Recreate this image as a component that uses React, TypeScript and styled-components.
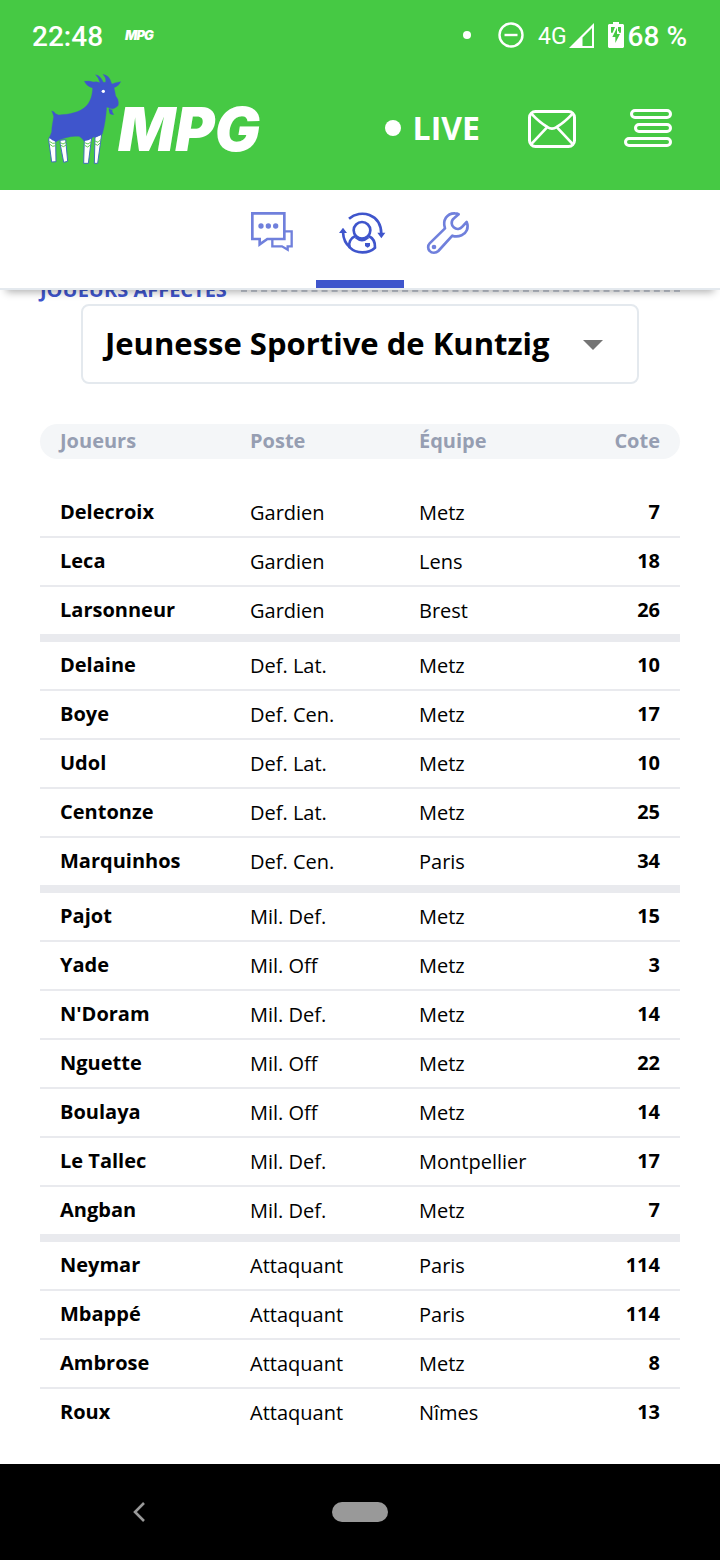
import React, { useState } from 'react';
import styled, { createGlobalStyle, css } from 'styled-components';

const green = '#46c944';
const blue = '#3f55cc';
const blueSoft = '#7080dc';
const line = '#e9eaee';

const GlobalStyle = createGlobalStyle`
  *, *::before, *::after { box-sizing: border-box; }
  body {
    margin: 0;
    background: #fff;
    color: #000;
    font-family: 'Open Sans', 'Noto Sans', sans-serif;
    font-size: 20px;
  }
`;

const Screen = styled.div`
  min-height: 100vh;
  display: flex;
  flex-direction: column;
`;

const Header = styled.header`
  position: sticky;
  top: 0;
  z-index: 2;
  background: #fff;
`;

const GreenArea = styled.div`
  background: ${green};
  color: #fff;
`;

const StatusBar = styled.div`
  height: 70px;
  padding: 0 33px 0 32px;
  display: flex;
  align-items: center;
`;

const StatusText = styled.span<{ $light?: boolean }>`
  padding-top: 4px;
  font-family: Roboto, sans-serif;
  font-size: ${(p) => (p.$light ? 23 : 28)}px;
  font-weight: ${(p) => (p.$light ? 400 : 500)};
  line-height: 32px;
`;

const MiniBrand = styled.span`
  margin: 0 auto 0 22px;
  font: italic 900 13px/16px Inter, sans-serif;
  letter-spacing: -1px;
`;

const Dot = styled.span<{ $size: number }>`
  width: ${(p) => p.$size}px;
  height: ${(p) => p.$size}px;
  border-radius: 50%;
  background: currentColor;
`;

const StatusGroup = styled.span<{ $gap: number }>`
  display: flex;
  align-items: center;
  gap: ${(p) => p.$gap}px;
`;

const Indicators = styled.div`
  display: flex;
  align-items: center;
`;

const DndIcon = styled.svg`
  width: 26px;
  height: 26px;
  margin: 0 14px 0 27px;
`;

const SignalIcon = styled.svg`
  width: 26px;
  height: 26px;
  margin-right: 13px;
`;

const BatteryIcon = styled.svg`
  width: 16px;
  height: 26px;
`;

const TopBar = styled.div`
  height: 120px;
  padding: 0 48px 2px;
  display: flex;
  align-items: center;
  justify-content: space-between;
`;

const Logo = styled.a`
  height: 118px;
  padding-top: 3px;
  display: flex;
  align-items: flex-start;
  color: #fff;
  text-decoration: none;
`;

const Goat = styled.svg`
  width: 70px;
  height: 92px;
  overflow: visible;
`;

const Wordmark = styled.span`
  padding-top: 21px;
  font: italic 900 60px/70px Inter, sans-serif;
`;

const Actions = styled.div`
  display: flex;
  align-items: center;
  gap: 48px;
`;

const Live = styled.a`
  padding-bottom: 2px;
  display: flex;
  align-items: center;
  gap: 12px;
  color: #fff;
  font-size: 32px;
  line-height: 40px;
  font-weight: 700;
  text-decoration: none;
`;

const IconButton = styled.button`
  display: flex;
  padding: 0;
  border: 0;
  background: none;
  color: inherit;
`;

const ActionIcon = styled.svg`
  width: 48px;
  height: 40px;
`;

const Tabs = styled.nav`
  display: flex;
  justify-content: center;
  border-bottom: 2px solid #e4e9ee;
  box-shadow: 0 8px 8px -6px rgba(0, 0, 0, 0.32);
`;

const Tab = styled.a<{ $active?: boolean }>`
  width: 88px;
  height: 98px;
  padding-top: 20px;
  display: flex;
  flex-direction: column;
  align-items: center;
  justify-content: space-between;
  color: ${(p) => (p.$active ? blue : blueSoft)};
  border-bottom: 8px solid ${(p) => (p.$active ? blue : 'transparent')};
`;

const TabIcon = styled.svg`
  width: 48px;
  height: 44px;
  overflow: visible;
  fill: none;
  stroke: currentColor;
  stroke-width: 8;
`;

const Main = styled.main`
  flex: 1;
  margin-top: -14px;
  padding: 0 40px 28px;
`;

const SectionTitle = styled.h2`
  margin: 0;
  display: flex;
  align-items: center;
  gap: 14px;
  color: ${blue};
  font-size: 20px;
  line-height: 28px;
  font-weight: 700;
  text-transform: uppercase;

  &::after {
    content: '';
    flex: 1;
    margin-top: 2px;
    border-top: 2px dashed #c4cad4;
  }
`;

const Picker = styled.label`
  position: relative;
  display: block;
  margin: 0 41px 40px;
`;

const TeamSelect = styled.select`
  appearance: none;
  width: 100%;
  height: 80px;
  padding: 0 60px 2px 16px;
  border: 2px solid #e4e9ee;
  border-radius: 8px;
  background: #fff;
  color: #000;
  font: 700 31px/44px 'Open Sans', 'Noto Sans', sans-serif;
  text-indent: 6px;
`;

const Caret = styled.svg`
  position: absolute;
  right: 36px;
  top: 36px;
  width: 20px;
  height: 10px;
  fill: #757575;
  pointer-events: none;
`;

const Table = styled.table`
  width: 100%;
  table-layout: fixed;
  border-collapse: separate;
  border-spacing: 0;
  line-height: 27px;
  text-align: left;
`;

const Col = styled.col<{ $width?: string }>`
  width: ${(p) => p.$width ?? 'auto'};
`;

const edges = css`
  &:first-child { padding-left: 20px; }
  &:last-child { padding-right: 20px; text-align: right; }
`;

const HeadCell = styled.th`
  height: 35px;
  padding: 0 0 2px;
  background: #f4f6f8;
  color: #969eb2;
  font-weight: 700;
  ${edges}
  &:first-child { border-radius: 18px 0 0 18px; }
  &:last-child { border-radius: 0 18px 18px 0; }
`;

const Body = styled.tbody`
  &::before {
    content: '';
    display: block;
    height: 30px;
  }
`;

const Row = styled.tr<{ $border: number }>`
  & > * {
    height: ${(p) => 47 + p.$border}px;
    padding: 0 0 1px;
    border-bottom: ${(p) => p.$border}px solid ${line};
    font-weight: 400;
    ${edges}
  }
  & > :first-child, & > :last-child {
    padding-bottom: 3px;
    font-weight: 700;
  }
`;

const SystemBar = styled.footer`
  position: sticky;
  bottom: 0;
  height: 96px;
  background: #000;
  display: grid;
  grid-template-columns: 1fr 56px 1fr;
  align-items: center;
  color: #999;
`;

const BackButton = styled(IconButton)`
  justify-self: center;
  margin-right: 54px;
`;

const HomeButton = styled.button`
  height: 20px;
  padding: 0;
  border: 0;
  border-radius: 10px;
  background: #999;
`;

const teams = ['Jeunesse Sportive de Kuntzig'];

type Player = [name: string, position: string, club: string, price: number];

const lines: Player[][] = [
  [
    ['Delecroix', 'Gardien', 'Metz', 7],
    ['Leca', 'Gardien', 'Lens', 18],
    ['Larsonneur', 'Gardien', 'Brest', 26],
  ],
  [
    ['Delaine', 'Def. Lat.', 'Metz', 10],
    ['Boye', 'Def. Cen.', 'Metz', 17],
    ['Udol', 'Def. Lat.', 'Metz', 10],
    ['Centonze', 'Def. Lat.', 'Metz', 25],
    ['Marquinhos', 'Def. Cen.', 'Paris', 34],
  ],
  [
    ['Pajot', 'Mil. Def.', 'Metz', 15],
    ['Yade', 'Mil. Off', 'Metz', 3],
    ["N'Doram", 'Mil. Def.', 'Metz', 14],
    ['Nguette', 'Mil. Off', 'Metz', 22],
    ['Boulaya', 'Mil. Off', 'Metz', 14],
    ['Le Tallec', 'Mil. Def.', 'Montpellier', 17],
    ['Angban', 'Mil. Def.', 'Metz', 7],
  ],
  [
    ['Neymar', 'Attaquant', 'Paris', 114],
    ['Mbappé', 'Attaquant', 'Paris', 114],
    ['Ambrose', 'Attaquant', 'Metz', 8],
    ['Roux', 'Attaquant', 'Nîmes', 13],
  ],
];

// A thin rule parts players, a thick one parts the lines of the squad.
function borderFor(lineIndex: number, playerIndex: number) {
  if (playerIndex < lines[lineIndex].length - 1) return 2;
  return lineIndex < lines.length - 1 ? 8 : 0;
}

function GoatLogo() {
  return (
    <Goat viewBox="24 15 210 276" aria-hidden="true">
      <g fill="#fff" stroke="#3f6fb8" strokeWidth="3" strokeLinejoin="round">
        <path d="M28 208 L47 216 L48 281 L35 282 L26 216 Z" />
        <path d="M60 217 L77 215 L83 280 L71 283 L61 230 Z" />
        <path d="M133 214 L155 208 L145 286 L131 286 Z" />
        <path d="M165 207 L185 199 L173 286 L163 286 Z" />
      </g>
      <g fill="none" stroke="#5fce50" strokeWidth="3">
        <path d="M28 220 L38 226 L47 225 M30 229 L38 235 L47 233" />
        <path d="M61 224 L69 228 L78 223 M63 232 L70 236 L79 231" />
        <path d="M134 224 L144 228 L153 222 M134 232 L143 237 L151 231" />
        <path d="M165 219 L174 223 L183 214 M165 228 L173 232 L181 224" />
      </g>
      <path
        fill={blue}
        stroke={blue}
        strokeWidth="1"
        d="M35 129 Q42 130 47 137 L56 141 C90 139 120 133 138 115 C152 100 157 82 158 60 Q140 55 133 40 Q148 38 160 42 Q170 40 180 44 Q177 30 167 20 Q182 23 190 43 L197 43 Q200 31 189 19 Q208 22 214 44 L216 48 Q226 43 242 41 Q236 54 222 59 Q225 72 227 84 Q236 93 235 108 Q236 114 229 117 Q222 125 210 121 L200 117 C198 145 194 175 187 198 Q176 204 166 208 L162 206 Q150 216 132 219 Q128 211 117 205 Q95 203 78 209 Q58 214 48 221 Q36 217 28 209 L35 192 C35 175 40 158 41 145 Q39 136 35 129 Z"
      />
      <path fill={blue} d="M207 121 Q214 127 217 124 Q215 134 222 140 Q208 142 208 132 Q205 128 207 121 Z" />
      <circle cx="190" cy="70" r="5" fill="#fff" />
    </Goat>
  );
}

export default function App() {
  const [team, setTeam] = useState(teams[0]);

  return (
    <Screen>
      <GlobalStyle />
      <Header>
        <GreenArea>
          <StatusBar>
            <StatusText>22:48</StatusText>
            <MiniBrand>MPG</MiniBrand>
            <Indicators>
              <Dot $size={8} />
              <DndIcon viewBox="0 0 26 26" fill="none" stroke="currentColor" aria-hidden="true">
                <circle cx="13" cy="13" r="11.5" strokeWidth="2.4" />
                <path d="M6.5 13 H19.5" strokeWidth="2.4" />
              </DndIcon>
              <StatusGroup $gap={2}>
                <StatusText $light>4G</StatusText>
                <SignalIcon viewBox="0 0 26 26" aria-hidden="true">
                  <path fill="currentColor" fillRule="evenodd" d="M25 1 V26 H0 Z M23 6 L13.5 15.5 V24 H23 Z" />
                </SignalIcon>
              </StatusGroup>
              <StatusGroup $gap={4}>
                <BatteryIcon viewBox="0 0 48 78" aria-hidden="true">
                  <path fill="currentColor" d="M15 0 H33 V6 H45 L48 9 V75 L45 78 H3 L0 75 V9 L3 6 H15 Z" />
                  <path fill={green} d="M9 15 H21 L14 32 H9 Z M30 15 H39 V32 H33 V28 H30 Z" />
                  <path fill={green} d="M27 17 L13 45 H22 V63 L36 36 H27 Z" />
                </BatteryIcon>
                <StatusText>68 %</StatusText>
              </StatusGroup>
            </Indicators>
          </StatusBar>
          <TopBar>
            <Logo href="#" aria-label="MPG">
              <GoatLogo />
              <Wordmark>MPG</Wordmark>
            </Logo>
            <Actions>
              <Live href="#live">
                <Dot $size={16} />
                <span>LIVE</span>
              </Live>
              <IconButton type="button" aria-label="Messages">
                <ActionIcon viewBox="504 327 144 120" fill="none" stroke="currentColor" strokeWidth="9" aria-hidden="true">
                  <rect x="508.500" y="334.500" width="135" height="105" rx="18" />
                  <path d="M514 341 C530 358 548 373 562 381 Q576 391 590 381 C604 373 622 358 638 341 M513 433 L561 382 M639 433 L591 382" strokeWidth="8" />
                </ActionIcon>
              </IconButton>
              <IconButton type="button" aria-label="Menu">
                <ActionIcon viewBox="792 327 144 120" fill="none" stroke="currentColor" strokeWidth="9" aria-hidden="true">
                  <rect x="814.500" y="331.500" width="117" height="21" rx="10.500" />
                  <rect x="826.500" y="373.500" width="105" height="21" rx="10.500" />
                  <rect x="796.500" y="415.500" width="135" height="21" rx="10.500" />
                </ActionIcon>
              </IconButton>
            </Actions>
          </TopBar>
        </GreenArea>
        <Tabs>
          <Tab href="#chat" aria-label="Discussion">
            <TabIcon viewBox="54 60 144 132">
              <path d="M67 70 H163 V147 H112 L89 163 V147 H67 Z" />
              <path d="M164 124 H185 V169 H173 V179 L156 169 H127 V150" strokeWidth="7" />
              <g fill="currentColor" stroke="none">
                <circle cx="93" cy="108" r="8" />
                <circle cx="115" cy="108" r="8" />
                <circle cx="137" cy="108" r="8" />
              </g>
            </TabIcon>
          </Tab>
          <Tab href="#mercato" aria-label="Mercato" $active>
            <TabIcon viewBox="318 60 144 132">
              <path d="M357 86 C392 56 453 72 454 132" />
              <path d="M339 126 C340 148 347 162 360 172" />
              <circle cx="396" cy="121" r="25" />
              <path d="M376 138 C361 145 355 159 359 172 C379 192 415 192 435 173 C436 155 429 144 416 138" />
              <path d="M378 141 Q396 157 414 141" strokeWidth="10" />
              <g fill="currentColor" stroke="none">
                <path d="M442 128 H466 L454 145 Z M327 129 H351 L339 113 Z" />
                <path d="M405 159 H420 V168 L413 173 L405 168 Z" />
              </g>
            </TabIcon>
          </Tab>
          <Tab href="#settings" aria-label="Réglages">
            <TabIcon viewBox="582 60 144 132">
              <path
                strokeLinejoin="round"
                strokeWidth="8"
                d="M599 160 L645 115 C637 92 650 69 675 70 Q682 70 686 73 L672 85 C661 94 665 107 671 112 C680 120 690 118 697 110 L710 96 C718 114 708 131 695 136 Q680 142 667 137 L625 183 C618 190 605 190 599 183 C593 177 593 166 599 160 Z"
              />
              <circle cx="612" cy="171" r="7" fill="currentColor" stroke="none" />
            </TabIcon>
          </Tab>
        </Tabs>
      </Header>

      <Main>
        <SectionTitle>Joueurs affectés</SectionTitle>
        <Picker>
          <TeamSelect aria-label="Équipe" value={team} onChange={(e) => setTeam(e.target.value)}>
            {teams.map((name) => (
              <option key={name}>{name}</option>
            ))}
          </TeamSelect>
          <Caret viewBox="0 0 20 10" aria-hidden="true">
            <path d="M0 0 H20 L10 10 Z" />
          </Caret>
        </Picker>
        <Table>
          <colgroup>
            <Col $width="210px" />
            <Col $width="169px" />
            <Col />
            <Col $width="110px" />
          </colgroup>
          <thead>
            <tr>
              <HeadCell scope="col">Joueurs</HeadCell>
              <HeadCell scope="col">Poste</HeadCell>
              <HeadCell scope="col">Équipe</HeadCell>
              <HeadCell scope="col">Cote</HeadCell>
            </tr>
          </thead>
          <Body>
            {lines.map((players, i) =>
              players.map(([name, position, club, price], j) => (
                <Row key={name} $border={borderFor(i, j)}>
                  <th scope="row">{name}</th>
                  <td>{position}</td>
                  <td>{club}</td>
                  <td>{price}</td>
                </Row>
              )),
            )}
          </Body>
        </Table>
      </Main>

      <SystemBar>
        <BackButton type="button" aria-label="Retour">
          <svg width="14" height="22" viewBox="0 0 14 22" fill="none" stroke="currentColor" strokeWidth="2.600" aria-hidden="true">
            <path d="M12 2 L3 11 L12 20" />
          </svg>
        </BackButton>
        <HomeButton type="button" aria-label="Accueil" />
      </SystemBar>
    </Screen>
  );
}
